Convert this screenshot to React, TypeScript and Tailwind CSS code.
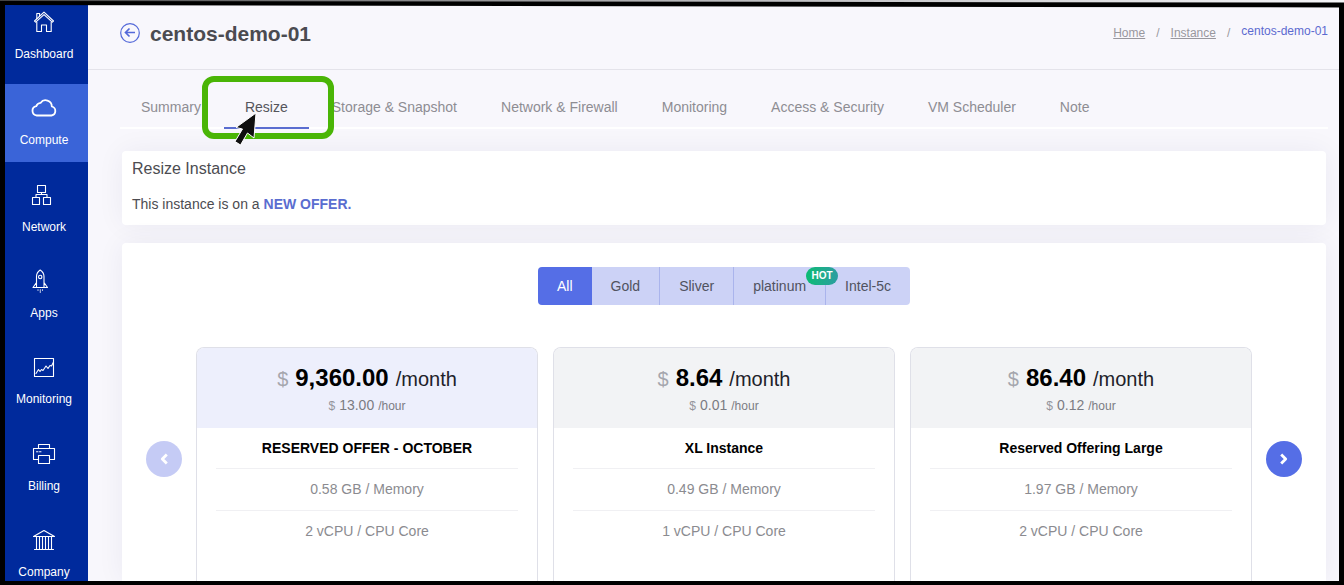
import type { ReactNode } from 'react';

function NavIcon({ children }: { children: ReactNode }) {
  return (
    <svg
      className="h-[26px] w-[26px]"
      viewBox="0 0 26 26"
      fill="none"
      stroke="currentColor"
      strokeWidth="1.1"
      strokeLinejoin="round"
      strokeLinecap="round"
      aria-hidden="true"
    >
      {children}
    </svg>
  );
}

const navItems: { label: string; active?: boolean; icon: ReactNode }[] = [
  {
    label: 'Dashboard',
    icon: (
      <NavIcon>
        <path d="M3.5 12 13 3.2 22.500 12 21.300 13.200 13 5.600 4.700 13.200Z" />
        <path d="M5.800 13v9.500h4.700v-6.500h5v6.500h4.700V13" />
        <path d="M5.800 9.500V4.500h2.800v2.500" />
      </NavIcon>
    ),
  },
  {
    label: 'Compute',
    active: true,
    icon: (
      <NavIcon>
        <path
          strokeWidth="1.8"
          d="M5.800 20.500a4.700 4.700 0 0 1-.5-9.300 5 5 0 0 1 4.200-3.300 6.200 6.200 0 0 1 11.300 3.600 4.600 4.600 0 0 1-.3 9Z"
        />
      </NavIcon>
    ),
  },
  {
    label: 'Network',
    icon: (
      <NavIcon>
        <path d="M6.500 3.500h8v7h-8zM1.500 15.500h7v7h-7zM12.500 15.500h7v7h-7zM10.500 10.500v2M5 15.500v-3h11v3" />
      </NavIcon>
    ),
  },
  {
    label: 'Apps',
    icon: (
      <NavIcon>
        <path d="M5.500 19.500V8.500c0-3 1.500-5 3.700-6.500 2.300 1.500 3.800 3.500 3.800 6.500v11ZM5.500 14.500 2 19.500h3.500M13 14.500l3.500 5H13" />
        <circle cx="9.200" cy="9" r="1.700" />
        <path strokeOpacity="0.7" d="M7 21.500v1M9.300 21.500v3M11.500 21.500v1" />
      </NavIcon>
    ),
  },
  {
    label: 'Monitoring',
    icon: (
      <NavIcon>
        <path d="M3.500 4.500h19v18h-19z" />
        <path d="m5 19.500 2.500-4 1.500 2 1.500-2 1.500 1 3-4.500 2 2.500 2-3 1.500.5 2-4" />
      </NavIcon>
    ),
  },
  {
    label: 'Billing',
    icon: (
      <NavIcon>
        <path d="M7.500 7.500v-4h11v4M7.500 18.500h-5v-11h21v11h-5M7.500 14.500h11v8h-11zM5.500 10.800h1.500M8.500 10.800h1.500" />
      </NavIcon>
    ),
  },
  {
    label: 'Company',
    icon: (
      <NavIcon>
        <path d="M2.500 9.500 13 3.500l10.500 6ZM3.500 22.500h19M5.500 9.500v13M8.500 9.500v13M11.500 9.500v13M14.500 9.500v13M17.500 9.500v13M20.500 9.500v13" />
      </NavIcon>
    ),
  },
];

const tabs = [
  'Summary',
  'Resize',
  'Storage & Snapshot',
  'Network & Firewall',
  'Monitoring',
  'Access & Security',
  'VM Scheduler',
  'Note',
];

const filters = ['All', 'Gold', 'Sliver', 'platinum', 'Intel-5c'];

const offers = [
  { month: '9,360.00', hour: '13.00', name: 'RESERVED OFFER - OCTOBER', memory: '0.58 GB', cpu: '2 vCPU', current: true },
  { month: '8.64', hour: '0.01', name: 'XL Instance', memory: '0.49 GB', cpu: '1 vCPU', current: false },
  { month: '86.40', hour: '0.12', name: 'Reserved Offering Large', memory: '1.97 GB', cpu: '2 vCPU', current: false },
];

function Sidebar() {
  return (
    <aside className="w-[83px] shrink-0 overflow-hidden bg-[#002a9c]">
      <nav className="-mt-[7px] flex h-[596px] flex-col justify-between">
        {navItems.map((item) => (
          <a
            key={item.label}
            href="#"
            className={`flex h-[78px] shrink-0 flex-col items-center gap-[11px] pt-[11px] pr-[5px] text-xs text-white ${
              item.active ? 'bg-[#3a64d8]' : ''
            }`}
          >
            {item.icon}
            {item.label}
          </a>
        ))}
      </nav>
    </aside>
  );
}

function Header() {
  return (
    <header className="flex h-[65px] shrink-0 items-center justify-between border-b border-[#e4e3ea] pr-[11px] pl-8">
      <div className="flex items-center gap-2.5 pb-[7px]">
        <button type="button" aria-label="Back" className="-mt-0.5 text-[#5469d9]">
          <svg className="h-5 w-5" viewBox="0 0 20 20" fill="none" stroke="currentColor" aria-hidden="true">
            <circle cx="10" cy="10" r="9.300" strokeWidth="1.200" />
            <path d="M15 9.500H6M9.500 5.500 5.500 9.500l4 4" strokeWidth="1.700" />
          </svg>
        </button>
        <h1 className="text-[21px] leading-7 font-bold text-[#4b4b51]">centos-demo-01</h1>
      </div>
      <nav aria-label="Breadcrumb" className="pb-[10px]">
        <ol className="flex items-start gap-[11px] text-xs text-[#98979e]">
          <li className="pt-0.5">
            <a href="#" className="underline">Home</a>
          </li>
          <li className="pt-0.5" aria-hidden="true">/</li>
          <li className="pt-0.5">
            <a href="#" className="underline">Instance</a>
          </li>
          <li className="pt-0.5" aria-hidden="true">/</li>
          <li className="text-[#5c6ad0]">centos-demo-01</li>
        </ol>
      </nav>
    </header>
  );
}

function Callout() {
  return (
    <>
      <span className="pointer-events-none absolute -top-[8px] -left-[22px] z-10 h-[63px] w-[132px] rounded-xl border-[6px] border-[#4ab506]" />
      <svg
        className="pointer-events-none absolute top-[27px] left-[9px] z-20 h-9 w-[26px]"
        viewBox="0 0 26 36"
        aria-hidden="true"
      >
        <path
          d="M23 2 3 16.500 9.500 18 2 30.500 7.500 34 14.500 22 21 27Z"
          fill="#0f0f0f"
          stroke="#ffffff"
          strokeWidth="1"
          strokeLinejoin="round"
        />
      </svg>
    </>
  );
}

function Tabs() {
  return (
    <div role="tablist" className="mt-[14px] mr-[11px] ml-8 flex shrink-0 border-b-2 border-white">
      {tabs.map((tab) => {
        const active = tab === 'Resize';
        return (
          <div key={tab} className="relative mr-0.5 -mb-0.5">
            <button
              type="button"
              role="tab"
              aria-selected={active}
              className={`h-[45px] border-b-2 px-[21px] pt-0.5 text-sm whitespace-nowrap ${
                active ? 'border-[#5a6dd0] text-[#55555b]' : 'border-transparent text-[#8e8d93]'
              }`}
            >
              {tab}
            </button>
            {active && <Callout />}
          </div>
        );
      })}
    </div>
  );
}

function Chevron({ d }: { d: string }) {
  return (
    <svg
      className="h-3 w-3"
      viewBox="0 0 12 12"
      fill="none"
      stroke="currentColor"
      strokeWidth="2.800"
      strokeLinejoin="round"
      aria-hidden="true"
    >
      <path d={d} />
    </svg>
  );
}

function OfferCard({ offer }: { offer: (typeof offers)[number] }) {
  return (
    <article className="flex flex-col overflow-hidden rounded-t-lg border border-b-0 border-[#dfe0e8] text-center text-sm">
      <div className={`h-20 pt-[14px] ${offer.current ? 'bg-[#edeffc]' : 'bg-[#f2f3f5]'}`}>
        <p className="flex items-baseline justify-center gap-[7px] text-xl leading-8 text-[#212129]">
          <span className="text-[#a5a6ad]">$</span>
          <strong className="text-2xl leading-8 text-black">{offer.month}</strong>
          <span>/month</span>
        </p>
        <p className="flex items-baseline justify-center gap-1 text-xs leading-5 text-[#7b7c83]">
          <span className="text-[#94959c]">$</span>
          <span className="text-sm leading-5">{offer.hour}</span>
          <span>/hour</span>
        </p>
      </div>
      <div className="flex flex-1 flex-col bg-white px-[19px] text-[#8b8b90]">
        <h3 className="h-[41px] border-b border-[#f0f0f3] leading-10 font-bold text-black">{offer.name}</h3>
        <p className="h-[42px] border-b border-[#f0f0f3] leading-[41px]">{offer.memory} / Memory</p>
        <p className="h-[42px] leading-[41px]">{offer.cpu} / CPU Core</p>
      </div>
    </article>
  );
}

export default function App() {
  return (
    <div className="relative flex h-screen overflow-hidden bg-black px-[5px] pt-[5px] pb-1 font-['Liberation_Sans',Arial,sans-serif]">
      <svg
        className="pointer-events-none absolute top-0 left-0 z-30 h-2 w-full"
        viewBox="0 0 1344 8"
        preserveAspectRatio="none"
        aria-hidden="true"
      >
        <defs>
          <linearGradient id="edge" x1="0" x2="1">
            <stop offset="0" stopColor="#444444" />
            <stop offset="0.5" stopColor="#b5b5b8" />
            <stop offset="1" stopColor="#f5f5f8" />
          </linearGradient>
        </defs>
        <path d="M0 0H1344V7.500L0 5Z" fill="#000000" />
        <path d="M0 0H1344V2.500L0 1Z" fill="url(#edge)" />
      </svg>
      <Sidebar />
      <main className="flex min-w-0 flex-1 flex-col overflow-hidden bg-[#f8f7fc]">
        <Header />
        <Tabs />
        <section className="mt-[22px] mr-[13px] ml-[34px] shrink-0 rounded-sm bg-white px-2.5 pt-1.5 pb-2.5 text-[#4c4c51] shadow-[0_0_28px_rgba(40,30,80,0.06)]">
          <h2 className="leading-6">Resize Instance</h2>
          <p className="mt-[13px] text-sm leading-[21px]">
            This instance is on a <strong className="text-[#5a6dd0]">NEW OFFER.</strong>
          </p>
        </section>
        <section className="mt-[18px] mr-[13px] ml-[34px] flex flex-1 flex-col rounded-t-sm bg-white px-6 pt-6 shadow-[0_0_28px_rgba(40,30,80,0.06)]">
          <div role="group" aria-label="Offer type" className="flex h-[38px] shrink-0 self-center">
            {filters.map((filter, i) => (
              <button
                key={filter}
                type="button"
                className={`relative px-[19px] text-sm first:rounded-l last:rounded-r ${
                  i === 0 ? 'bg-[#556ee6] text-white' : 'bg-[#ccd2f6] text-[#505260]'
                } ${i > 1 ? 'border-l border-[#aab4ec]' : ''}`}
              >
                {filter}
                {filter === 'platinum' && (
                  <span className="absolute top-0 -right-[13px] z-10 h-[18px] w-8 rounded-full bg-linear-to-r from-[#0abb72] to-[#2b9da0] text-center text-[10px] leading-[18px] font-bold text-white">
                    HOT
                  </span>
                )}
              </button>
            ))}
          </div>
          <div className="mt-[42px] flex flex-1 gap-[14px]">
            <button
              type="button"
              aria-label="Previous offers"
              disabled
              className="mt-[94px] flex h-9 w-9 shrink-0 items-center justify-center rounded-full bg-[#c5cbf5] text-white"
            >
              <Chevron d="M8.800 1.500 4.300 6l4.500 4.500" />
            </button>
            <div className="grid min-w-0 flex-1 grid-cols-3 gap-[15px]">
              {offers.map((offer) => (
                <OfferCard key={offer.name} offer={offer} />
              ))}
            </div>
            <button
              type="button"
              aria-label="Next offers"
              className="mt-[94px] flex h-9 w-9 shrink-0 items-center justify-center rounded-full bg-[#556ee6] text-white"
            >
              <Chevron d="M3.200 1.500 7.700 6l-4.500 4.500" />
            </button>
          </div>
        </section>
      </main>
    </div>
  );
}
